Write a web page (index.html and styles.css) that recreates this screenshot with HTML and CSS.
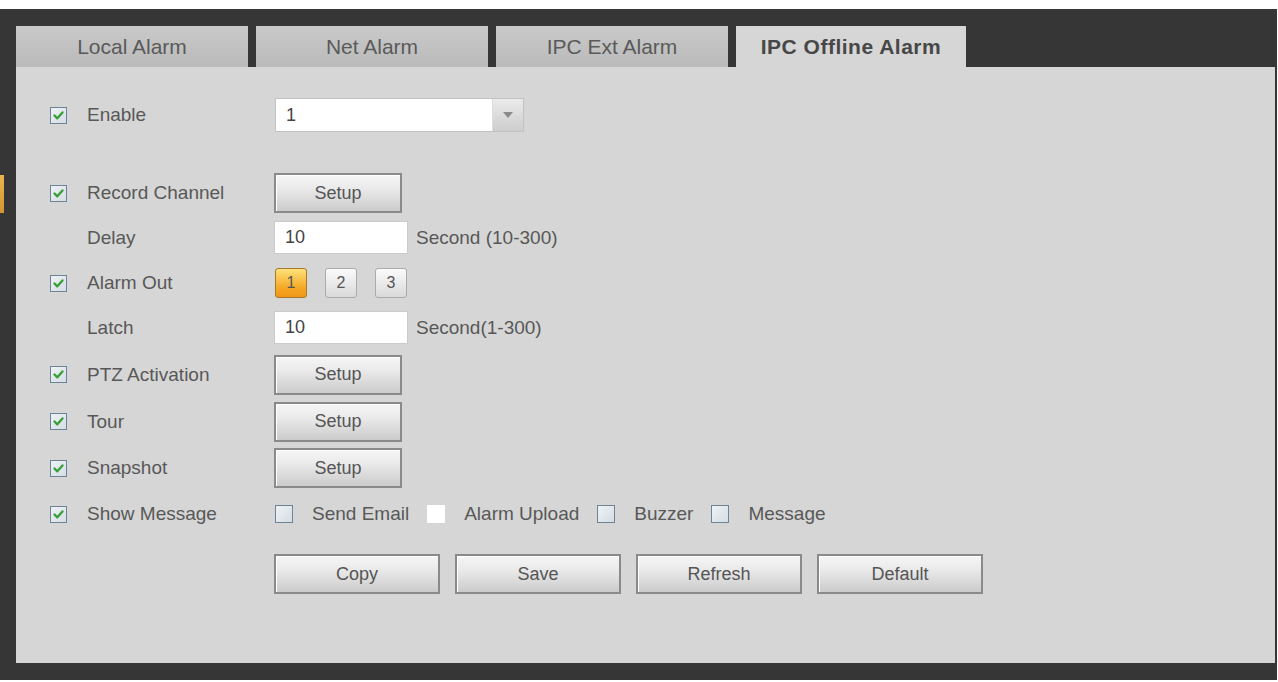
FILE: index.html
```html
<!DOCTYPE html>
<html lang="en">
<head>
<meta charset="utf-8">
<title>IPC Offline Alarm</title>
<link rel="stylesheet" href="styles.css">
</head>
<body>
<div class="frame">
  <div class="marker"></div>
  <div class="tabs">
    <div class="tab">Local Alarm</div>
    <div class="tab">Net Alarm</div>
    <div class="tab">IPC Ext Alarm</div>
    <div class="tab active">IPC Offline Alarm</div>
  </div>
  <div class="panel">
    <div class="form">
      <div class="cbcell"><span class="check on"><svg viewBox="0 0 15 15"><path d="M3.5 7.5 L6.3 10.3 L11.5 4.5"/></svg></span></div>
      <div class="label">Enable</div>
      <div class="control">
        <div class="select"><span class="val">1</span><span class="arrow"><i></i></span></div>
      </div>

      <div class="spacer"></div>

      <div class="cbcell"><span class="check on"><svg viewBox="0 0 15 15"><path d="M3.5 7.5 L6.3 10.3 L11.5 4.5"/></svg></span></div>
      <div class="label">Record Channel</div>
      <div class="control"><button class="btn setup">Setup</button></div>

      <div class="cbcell"></div>
      <div class="label">Delay</div>
      <div class="control"><span class="num">10</span><span class="unit">Second (10-300)</span></div>

      <div class="cbcell"><span class="check on"><svg viewBox="0 0 15 15"><path d="M3.5 7.5 L6.3 10.3 L11.5 4.5"/></svg></span></div>
      <div class="label">Alarm Out</div>
      <div class="control outs">
        <span class="ao sel">1</span><span class="ao">2</span><span class="ao">3</span>
      </div>

      <div class="cbcell"></div>
      <div class="label">Latch</div>
      <div class="control"><span class="num">10</span><span class="unit">Second(1-300)</span></div>

      <div class="cbcell"><span class="check on"><svg viewBox="0 0 15 15"><path d="M3.5 7.5 L6.3 10.3 L11.5 4.5"/></svg></span></div>
      <div class="label">PTZ Activation</div>
      <div class="control"><button class="btn setup">Setup</button></div>

      <div class="cbcell"><span class="check on"><svg viewBox="0 0 15 15"><path d="M3.5 7.5 L6.3 10.3 L11.5 4.5"/></svg></span></div>
      <div class="label">Tour</div>
      <div class="control"><button class="btn setup">Setup</button></div>

      <div class="cbcell"><span class="check on"><svg viewBox="0 0 15 15"><path d="M3.5 7.5 L6.3 10.3 L11.5 4.5"/></svg></span></div>
      <div class="label">Snapshot</div>
      <div class="control"><button class="btn setup">Setup</button></div>

      <div class="cbcell"><span class="check on"><svg viewBox="0 0 15 15"><path d="M3.5 7.5 L6.3 10.3 L11.5 4.5"/></svg></span></div>
      <div class="label">Show Message</div>
      <div class="control opts">
        <span class="check"></span><span class="opt">Send Email</span>
        <span class="check plain"></span><span class="opt">Alarm Upload</span>
        <span class="check"></span><span class="opt">Buzzer</span>
        <span class="check"></span><span class="opt">Message</span>
      </div>
    </div>
    <div class="actions">
      <button class="btn wide">Copy</button>
      <button class="btn wide">Save</button>
      <button class="btn wide">Refresh</button>
      <button class="btn wide">Default</button>
    </div>
  </div>
</div>
</body>
</html>
```

FILE: styles.css
```css
html, body {
  margin: 0;
  padding: 0;
  background: #ffffff;
}

body {
  font-family: "Liberation Sans", Arial, sans-serif;
  color: #555555;
}

.frame {
  position: relative;
  margin-top: 9px;
  width: 1277px;
  box-sizing: border-box;
  background: #363636;
  padding: 17px 2px 17px 16px;
}

.marker {
  position: absolute;
  left: 0;
  top: 166px;
  width: 4px;
  height: 38px;
  background: linear-gradient(#e9b64e, #d39630);
}

.tabs {
  display: flex;
  gap: 8px;
  height: 41px;
}

.tab {
  width: 232px;
  display: flex;
  align-items: center;
  justify-content: center;
  background: linear-gradient(#c9c9c9, #bababa);
  color: #5a5a5a;
  font-size: 21px;
}

.tab.active {
  width: 230px;
  background: #d6d6d6;
  font-weight: bold;
  color: #474747;
  letter-spacing: 0.5px;
}

.panel {
  background: #d6d6d6;
  height: 596px;
  box-sizing: border-box;
  padding: 31px 0 0 34px;
}

.form {
  display: grid;
  grid-template-columns: 37px 187px auto;
  grid-template-rows: 34px 41px 40px 49px 42px 47px 47px 47px 46px 46px;
  align-items: center;
}

.spacer {
  grid-column: 1 / -1;
}

.cbcell {
  display: flex;
  align-items: center;
}

.label {
  font-size: 19px;
  color: #585858;
}

.control {
  display: flex;
  align-items: center;
}

.check {
  display: inline-flex;
  width: 15px;
  height: 15px;
  border: 1px solid #6d8496;
  background: linear-gradient(135deg, #eef2f5, #d5dde3);
  box-sizing: content-box;
}

.check svg {
  width: 15px;
  height: 15px;
}

.check svg path {
  fill: none;
  stroke: #38a038;
  stroke-width: 2.4;
  stroke-linecap: round;
  stroke-linejoin: round;
}

.check.plain {
  border-color: #ffffff;
  background: #ffffff;
}

.select {
  width: 249px;
  height: 34px;
  box-sizing: border-box;
  border: 1px solid #c2c2c2;
  background: #ffffff;
  display: flex;
  margin-left: 1px;
}

.select .val {
  flex: 1;
  padding-left: 10px;
  font-size: 18px;
  line-height: 32px;
  color: #444444;
}

.select .arrow {
  width: 30px;
  background: linear-gradient(#ebebeb, #cdcdcd);
  border-left: 1px solid #dddddd;
  display: flex;
  align-items: center;
  justify-content: center;
}

.select .arrow i {
  width: 0;
  height: 0;
  border-left: 5px solid transparent;
  border-right: 5px solid transparent;
  border-top: 6px solid #8a8a8a;
}

.btn {
  box-sizing: border-box;
  height: 40px;
  border: 2px solid #8a8a8a;
  background: linear-gradient(#f6f6f6 0%, #e9e9e9 40%, #cbcbcb 100%);
  box-shadow: inset 1px 1px 0 #ffffff;
  font-family: "Liberation Sans", Arial, sans-serif;
  font-size: 18px;
  color: #555555;
  padding: 0;
}

.btn.setup {
  width: 128px;
}

.btn.wide {
  width: 166px;
}

.num {
  width: 134px;
  height: 33px;
  box-sizing: border-box;
  border: 1px solid #cbcbcb;
  background: #ffffff;
  padding-left: 10px;
  font-size: 18px;
  line-height: 31px;
  color: #444444;
}

.unit {
  margin-left: 8px;
  font-size: 19px;
  color: #585858;
}

.outs {
  gap: 18px;
  padding-left: 1px;
}

.ao {
  width: 32px;
  height: 30px;
  box-sizing: border-box;
  border: 1px solid #ababab;
  border-radius: 3px;
  background: linear-gradient(#fbfbfb, #d9d9d9);
  display: flex;
  align-items: center;
  justify-content: center;
  font-size: 16px;
  color: #555555;
}

.ao.sel {
  border-color: #a8792c;
  background: linear-gradient(#fde27a, #f5a623 70%, #ef961a);
}

.opts {
  padding-left: 1px;
}

.opts .check {
  width: 16px;
  height: 16px;
}

.opt {
  font-size: 19px;
  color: #585858;
  margin-left: 19px;
  margin-right: 18px;
}

.actions {
  display: flex;
  gap: 15px;
  margin-top: 17px;
  padding-left: 224px;
}
```
